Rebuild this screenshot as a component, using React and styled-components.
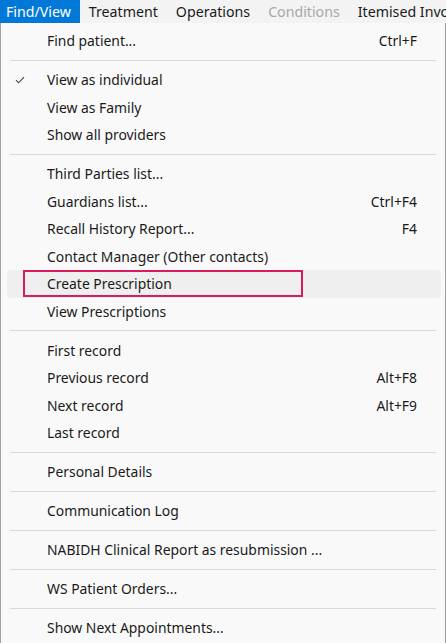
import React from 'react';
import styled, { createGlobalStyle } from 'styled-components';

const GlobalStyle = createGlobalStyle`
  html, body {
    margin: 0;
    padding: 0;
    background: #ffffff;
  }
`;

const menuBar = [
  { label: 'Find/View', active: true },
  { label: 'Treatment' },
  { label: 'Operations' },
  { label: 'Conditions', disabled: true },
  { label: 'Itemised Invoice' },
];

const groups = [
  [{ label: 'Find patient...', shortcut: 'Ctrl+F' }],
  [
    { label: 'View as individual', checked: true },
    { label: 'View as Family' },
    { label: 'Show all providers' },
  ],
  [
    { label: 'Third Parties list...' },
    { label: 'Guardians list...', shortcut: 'Ctrl+F4' },
    { label: 'Recall History Report...', shortcut: 'F4' },
    { label: 'Contact Manager (Other contacts)' },
    { label: 'Create Prescription', hovered: true, marked: true },
    { label: 'View Prescriptions' },
  ],
  [
    { label: 'First record' },
    { label: 'Previous record', shortcut: 'Alt+F8' },
    { label: 'Next record', shortcut: 'Alt+F9' },
    { label: 'Last record' },
  ],
  [{ label: 'Personal Details' }],
  [{ label: 'Communication Log' }],
  [{ label: 'NABIDH Clinical Report as resubmission ...' }],
  [{ label: 'WS Patient Orders...' }],
  [{ label: 'Show Next Appointments...' }],
];

const App = () => {
  return (
    <>
      <GlobalStyle />
      <Frame>
        <MenuBar>
          {menuBar.map((m) => (
            <BarItem key={m.label} $active={m.active} $disabled={m.disabled}>
              {m.label}
            </BarItem>
          ))}
        </MenuBar>
        <Panel>
          {groups.map((group, gi) => (
            <React.Fragment key={gi}>
              {gi > 0 && <Separator />}
              {group.map((item) => (
                <Row key={item.label} $hovered={item.hovered}>
                  <CheckCell>
                    {item.checked && (
                      <svg width="10" height="8" viewBox="0 0 10 8">
                        <path
                          d="M1 4.2 L3.6 6.8 L9 1.2"
                          fill="none"
                          stroke="#444"
                          strokeWidth="1.1"
                        />
                      </svg>
                    )}
                  </CheckCell>
                  <Label>{item.label}</Label>
                  <Shortcut>{item.shortcut}</Shortcut>
                  {item.marked && <Marker />}
                </Row>
              ))}
            </React.Fragment>
          ))}
        </Panel>
      </Frame>
    </>
  );
};

const Frame = styled.div`
  width: 446px;
  height: 643px;
  overflow: hidden;
  display: flex;
  flex-direction: column;
  font-family: 'Noto Sans', 'Open Sans', sans-serif;
  font-size: 13.9px;
  color: #1a1a1a;
`;

const MenuBar = styled.div`
  display: flex;
  height: 23px;
  flex-shrink: 0;
  background: #f3f3f3;
  white-space: nowrap;
  font-size: 14.2px;
`;

const BarItem = styled.div`
  display: flex;
  align-items: center;
  flex-shrink: 0;
  padding: 0 9px 0 ${(p) => (p.$active ? '6px' : '9px')};
  background: ${(p) => (p.$active ? '#0078d7' : 'transparent')};
  color: ${(p) => (p.$active ? '#ffffff' : p.$disabled ? '#a8a8a8' : '#1a1a1a')};
  line-height: 23px;
`;

const Panel = styled.div`
  flex: 1;
  display: flex;
  flex-direction: column;
  padding-top: 4px;
  background: #f9f9f9;
  border-left: 1px solid #a0a0a0;
  border-right: 1px solid #a0a0a0;
`;

const Separator = styled.div`
  height: 11.5px;
  margin: 0 9px 0 9px;
  display: flex;
  align-items: center;
  &::after {
    content: '';
    flex: 1;
    height: 1px;
    background: #d9d9d9;
  }
`;

const Row = styled.div`
  position: relative;
  display: grid;
  grid-template-columns: 40px 1fr auto;
  align-items: center;
  height: 27.5px;
  margin: 0 4px 0 6px;
  padding-right: 24px;
  border-radius: 4px;
  background: ${(p) => (p.$hovered ? '#efefef' : 'transparent')};
`;

const CheckCell = styled.div`
  display: flex;
  align-items: center;
  padding-left: 8px;
`;

const Label = styled.span`
  white-space: nowrap;
`;

const Shortcut = styled.span`
  white-space: nowrap;
`;

const Marker = styled.div`
  position: absolute;
  left: 16px;
  top: 0;
  width: 280px;
  height: 27px;
  box-sizing: border-box;
  border: 2.5px solid #d81b5c;
`;

export default App;
